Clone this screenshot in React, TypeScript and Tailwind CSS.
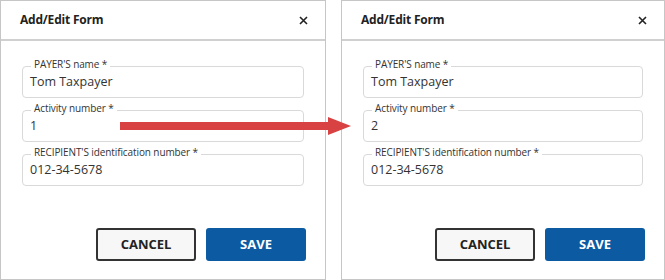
import React from "react";

const font = { fontFamily: '"Open Sans", "Noto Sans", sans-serif' };

function Field({ label, value }: { label: string; value: string }) {
  return (
    <div className="relative h-[32px] rounded-[4px] border border-[#d9d9d9] bg-white flex items-center pl-[7px]">
      <span className="absolute left-[8px] top-[-10px] bg-white px-[3px] text-[10px] leading-[14px] text-[#333] tracking-[-0.1px]">
        {label}
      </span>
      <span className="text-[12.5px] text-[#333] leading-none">{value}</span>
    </div>
  );
}

function Panel({ activity, width }: { activity: string; width: string }) {
  return (
    <div className={`${width} h-[280px] border border-[#c6c6c6] bg-white flex flex-col`}>
      <div className="h-[40px] shrink-0 border-b-2 border-[#d0d0d0] flex items-center justify-between pl-[19px] pr-[17px]">
        <span className="text-[12px] font-bold text-[#222] tracking-[-0.2px]">Add/Edit Form</span>
        <svg width="9" height="9" viewBox="0 0 9 9" className="mt-[1px]">
          <path d="M1 1 L8 8 M8 1 L1 8" stroke="#222" strokeWidth="1.6" />
        </svg>
      </div>
      <div className="flex flex-col gap-[12px] pt-[25px] pl-[21px] pr-[21px]">
        <Field label="PAYER'S name *" value="Tom Taxpayer" />
        <Field label="Activity number *" value={activity} />
        <Field label="RECIPIENT'S identification number *" value="012-34-5678" />
      </div>
      <div className="mt-auto flex justify-end gap-[10px] pr-[19px] pb-[18px]">
        <button className="w-[100px] h-[33px] rounded-[3px] border-2 border-[#333] bg-[#f7f7f7] text-[13px] font-bold text-[#222]">
          CANCEL
        </button>
        <button className="w-[100px] h-[33px] rounded-[3px] bg-[#0b5aa2] text-[13px] font-bold text-white">
          SAVE
        </button>
      </div>
    </div>
  );
}

export default function App() {
  return (
    <div className="relative w-[665px] h-[280px] bg-white flex gap-[15px]" style={font}>
      <Panel activity="1" width="w-[326px]" />
      <Panel activity="2" width="w-[324px]" />
      <svg
        className="absolute left-0 top-0 pointer-events-none"
        width="665"
        height="280"
        viewBox="0 0 665 280"
      >
        <rect x="120" y="122" width="209" height="8" fill="#d94242" />
        <polygon points="328,117 351,126 328,135" fill="#d94242" />
      </svg>
    </div>
  );
}
